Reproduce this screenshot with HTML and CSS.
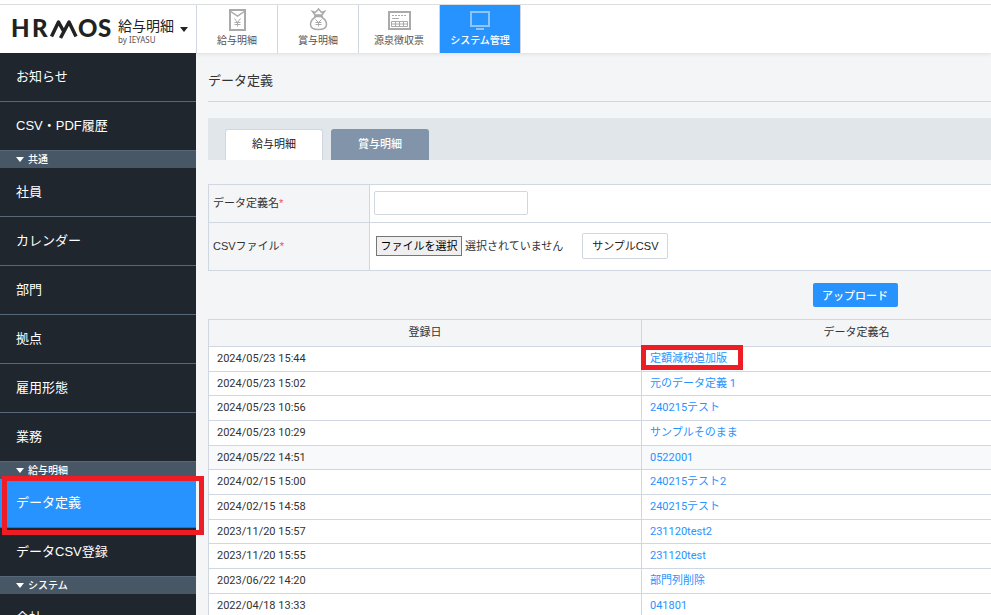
FILE: index.html
```
<!DOCTYPE html>
<html lang="ja">
<head>
    <meta charset="UTF-8">
    <meta name="viewport" content="width=device-width, initial-scale=1.0">
    <title>データ定義</title>
    <link rel="stylesheet" href="styles.css">
</head>
<body>
    <header class="header">
        <div class="brand">
            <svg class="brand-logo" width="100" height="20" viewBox="0 0 100 20" role="img" aria-label="HRMOS">
                <text class="brand-text" x="-1 20 66 86" y="18">HROS</text>
                <path d="M39.500 17.500L46.500 3L51.500 12M48.500 19L57 3L64 17.500" fill="none" stroke="#222" stroke-width="3.500" stroke-linejoin="round"/>
            </svg>
            <div class="brand-product">
                <span class="brand-name">給与明細</span>
                <span class="brand-by">by IEYASU</span>
            </div>
            <span class="caret"></span>
        </div>
        <nav class="global-nav">
            <a href="#" class="global-item">
                <svg width="24" height="24" viewBox="0 0 24 24" fill="none" stroke="#aaa">
                    <path d="M5 2h15v20H5z" stroke-width="2"/>
                    <path d="M5 3l7.500 5L20 3" stroke-width="1.500"/>
                    <path d="M9.500 10.500l3 4l3-4M12.500 14.500v4M9.500 14.500h6M9.500 16.500h6"/>
                </svg>
                給与明細
            </a>
            <a href="#" class="global-item">
                <svg width="24" height="24" viewBox="0 0 24 24" fill="none" stroke="#aaa">
                    <path d="M9 7L6.500 3.500l3 1L12.500 1l3 3.500l3-1L16 7zM8 8.500h9M9.500 9c-3.500 2-5 5-5 7.500c0 3.500 3 5 8 5s8-1.500 8-5c0-2.500-1.500-5.500-5-7.500" stroke-width="1.500"/>
                    <path d="M9.500 11.500l3 3l3-3M12.500 14.500v4M9.500 14.500h6M9.500 16.500h6"/>
                </svg>
                賞与明細
            </a>
            <a href="#" class="global-item">
                <svg width="24" height="24" viewBox="0 0 24 24" fill="none" stroke="#aaa">
                    <path d="M2 4h21v17H2z" stroke-width="2"/>
                    <path d="M5 7.500h15" stroke-dasharray="2 1"/>
                    <path d="M5 10.500h7M4.500 13.500h16v5h-16zM4.500 16h16M8.500 13.500v5M12.500 13.500v5M16.500 13.500v5"/>
                </svg>
                源泉徴収票
            </a>
            <a href="#" class="global-item active">
                <svg width="24" height="24" viewBox="0 0 24 24" fill="none" stroke="#8cc5ff" stroke-width="2">
                    <path d="M3 4h18v14H3zM8 21h8"/>
                </svg>
                システム管理
            </a>
        </nav>
    </header>

    <div class="layout">
        <nav class="sidebar">
            <a href="#" class="side-item">お知らせ</a>
            <a href="#" class="side-item">CSV・PDF履歴</a>
            <h2 class="side-heading"><span class="caret"></span>共通</h2>
            <a href="#" class="side-item">社員</a>
            <a href="#" class="side-item">カレンダー</a>
            <a href="#" class="side-item">部門</a>
            <a href="#" class="side-item">拠点</a>
            <a href="#" class="side-item">雇用形態</a>
            <a href="#" class="side-item">業務</a>
            <h2 class="side-heading"><span class="caret"></span>給与明細</h2>
            <a href="#" class="side-item active">データ定義<span class="marker marker-side"></span></a>
            <a href="#" class="side-item">データCSV登録</a>
            <h2 class="side-heading"><span class="caret"></span>システム</h2>
            <a href="#" class="side-item">会社</a>
        </nav>

        <main class="main">
            <h1 class="page-title">データ定義</h1>

            <div class="tabs">
                <button type="button" class="tab active">給与明細</button>
                <button type="button" class="tab">賞与明細</button>
            </div>

            <form class="upload-form">
                <table class="form-table">
                    <tr>
                        <th><label for="definition-name">データ定義名<span class="required">*</span></label></th>
                        <td><input type="text" id="definition-name" class="text-input"></td>
                    </tr>
                    <tr class="file-row">
                        <th>CSVファイル<span class="required">*</span></th>
                        <td>
                            <div class="file-field">
                                <input type="file" id="csv-file" class="file-input">
                                <label for="csv-file" class="file-button">ファイルを選択</label>
                                <span class="file-status">選択されていません</span>
                                <button type="button" class="sample-button">サンプルCSV</button>
                            </div>
                        </td>
                    </tr>
                </table>
                <button type="submit" class="upload-button">アップロード</button>
            </form>

            <table class="list-table">
                <thead>
                    <tr><th class="date-column">登録日</th><th>データ定義名</th><td></td></tr>
                </thead>
                <tbody>
                    <tr><td>2024/05/23 15:44</td><td class="marked"><a href="#">定額減税追加版</a><span class="marker marker-link"></span></td><td></td></tr>
                    <tr><td>2024/05/23 15:02</td><td><a href="#">元のデータ定義 1</a></td><td></td></tr>
                    <tr><td>2024/05/23 10:56</td><td><a href="#">240215テスト</a></td><td></td></tr>
                    <tr><td>2024/05/23 10:29</td><td><a href="#">サンプルそのまま</a></td><td></td></tr>
                    <tr class="hover"><td>2024/05/22 14:51</td><td><a href="#">0522001</a></td><td></td></tr>
                    <tr><td>2024/02/15 15:00</td><td><a href="#">240215テスト2</a></td><td></td></tr>
                    <tr><td>2024/02/15 14:58</td><td><a href="#">240215テスト</a></td><td></td></tr>
                    <tr><td>2023/11/20 15:57</td><td><a href="#">231120test2</a></td><td></td></tr>
                    <tr><td>2023/11/20 15:55</td><td><a href="#">231120test</a></td><td></td></tr>
                    <tr><td>2023/06/22 14:20</td><td><a href="#">部門列削除</a></td><td></td></tr>
                    <tr><td>2022/04/18 13:33</td><td><a href="#">041801</a></td><td></td></tr>
                </tbody>
            </table>
        </main>
    </div>
</body>
</html>
```
FILE: styles.css
```
* {
    margin: 0;
    padding: 0;
    box-sizing: border-box;
}

body {
    font-family: "Liberation Sans", "Noto Sans CJK JP", sans-serif;
    font-size: 11px;
    line-height: 16px;
    color: #333;
    background: #f3f5f7;
    height: 100vh;
    display: flex;
    flex-direction: column;
    overflow: hidden;
}

a {
    color: #2793ff;
    text-decoration: none;
}

button,
input {
    font: inherit;
}

.caret {
    border: 4px solid transparent;
    border-top: 5px solid currentColor;
    border-bottom: 0;
}

/* Header */
.header {
    flex: none;
    display: flex;
    margin-top: 4px;
    height: 49px;
    border-top: 1px solid #ddd;
    background: #fff;
    box-shadow: 0 -4px #fff, 0 1px 4px rgba(0, 0, 0, 0.1);
    position: relative;
}

.brand {
    width: 196px;
    padding-left: 12px;
    display: flex;
    align-items: center;
    color: #222;
}

.brand-logo {
    margin-right: 6px;
    overflow: visible;
}

.brand-text {
    font-family: Lato, sans-serif;
    font-size: 24px;
    font-weight: 900;
    fill: #222;
}

.brand-product {
    display: flex;
    flex-direction: column;
    padding-top: 2px;
    margin-right: 6px;
}

.brand-name {
    font-size: 14px;
    line-height: 20px;
}

.brand-by {
    font-family: "Noto Sans", sans-serif;
    font-size: 8px;
    line-height: 8px;
    color: #555;
}

.global-nav {
    display: flex;
    border-left: 1px solid #d0d7e0;
}

.global-item {
    width: 81px;
    padding-top: 3px;
    border-right: 1px solid #d0d7e0;
    display: flex;
    flex-direction: column;
    align-items: center;
    gap: 1px;
    font-size: 10px;
    color: #555;
}

.global-item.active {
    background: #2793ff;
    color: #fff;
    font-weight: 500;
}

/* Sidebar */
.layout {
    flex: 1;
    min-height: 0;
    display: flex;
}

.sidebar {
    flex: none;
    width: 196px;
    background: #20262e;
    color: #fff;
    position: relative;
    z-index: 1;
}

.side-item {
    display: block;
    height: 49px;
    padding-left: 16px;
    border-bottom: 1px solid #566779;
    font-size: 13px;
    line-height: 48px;
    color: #fff;
    position: relative;
}

.side-item.active {
    background: #2793ff;
}

.side-heading {
    height: 17px;
    padding-left: 16px;
    display: flex;
    align-items: center;
    gap: 4px;
    background: #485765;
    font-size: 10px;
    font-weight: 500;
    line-height: 18px;
}

/* Red frames that point out where to click */
.marker {
    position: absolute;
    border: 5px solid #ee1c24;
    pointer-events: none;
}

.marker-side {
    inset: -3px -8px -8px 2px;
}

.marker-link {
    top: -2px;
    left: -1px;
    width: 102px;
    height: 25px;
}

/* Main */
.main {
    flex: 1;
    min-width: 1306px;
    padding-left: 12px;
}

.page-title {
    height: 49px;
    border-bottom: 1px solid #d0d7e0;
    font-size: 13px;
    font-weight: 400;
    line-height: 56px;
}

.tabs {
    display: flex;
    align-items: flex-end;
    gap: 8px;
    height: 42px;
    margin: 16px 0 24px;
    padding-left: 17px;
    background: #e1e6ea;
}

.tab {
    width: 98px;
    height: 31px;
    padding-bottom: 2px;
    border: 1px solid #8294a9;
    border-bottom: 0;
    border-radius: 3px 3px 0 0;
    background: #8294a9;
    color: #fff;
    font-weight: 500;
}

.tab.active {
    border-color: #d0d7e0;
    background: #fff;
    color: #222;
    font-weight: 400;
}

table {
    width: 100%;
    border-collapse: collapse;
    table-layout: fixed;
    background: #fff;
}

th,
td {
    border: 1px solid #d0d7e0;
}

th {
    background: #f3f5f7;
    font-weight: 400;
}

.form-table th,
.form-table td {
    padding: 0 0 2px 4px;
}

.form-table th {
    width: 161px;
    height: 38px;
    text-align: left;
}

.form-table .file-row th {
    height: 48px;
}

.required {
    color: #f05050;
}

.text-input {
    display: block;
    width: 154px;
    height: 24px;
    padding: 0 6px;
    border: 1px solid #d0d7e0;
    border-radius: 2px;
}

.file-field {
    display: flex;
    align-items: center;
    padding-left: 2px;
    position: relative;
}

.file-input {
    position: absolute;
    width: 1px;
    height: 1px;
    opacity: 0;
}

.file-button {
    width: 86px;
    height: 20px;
    border: 1px solid #767676;
    background: #efefef;
    color: #000;
    line-height: 18px;
    text-align: center;
    white-space: nowrap;
}

.file-status {
    margin: 0 19px 0 3px;
}

.sample-button {
    width: 86px;
    height: 26px;
    border: 1px solid #d0d7e0;
    border-radius: 2px;
    background: #fff;
    color: #222;
}

.upload-button {
    display: block;
    width: 85px;
    height: 24px;
    margin: 12px auto;
    padding-top: 2px;
    border: 0;
    border-radius: 2px;
    background: #2793ff;
    color: #fff;
    font-weight: 500;
}

.list-table {
    font-family: Roboto, "Noto Sans CJK JP", sans-serif;
}

.list-table th {
    height: 27px;
}

.list-table .date-column {
    width: 433px;
}

.list-table td {
    padding-left: 8px;
}

.list-table tbody tr {
    height: 25px;
}

.list-table tbody tr:nth-child(3n+2) {
    height: 24px;
}

.list-table .hover td {
    background: #f8f9fb;
}

.marked {
    position: relative;
}
```
